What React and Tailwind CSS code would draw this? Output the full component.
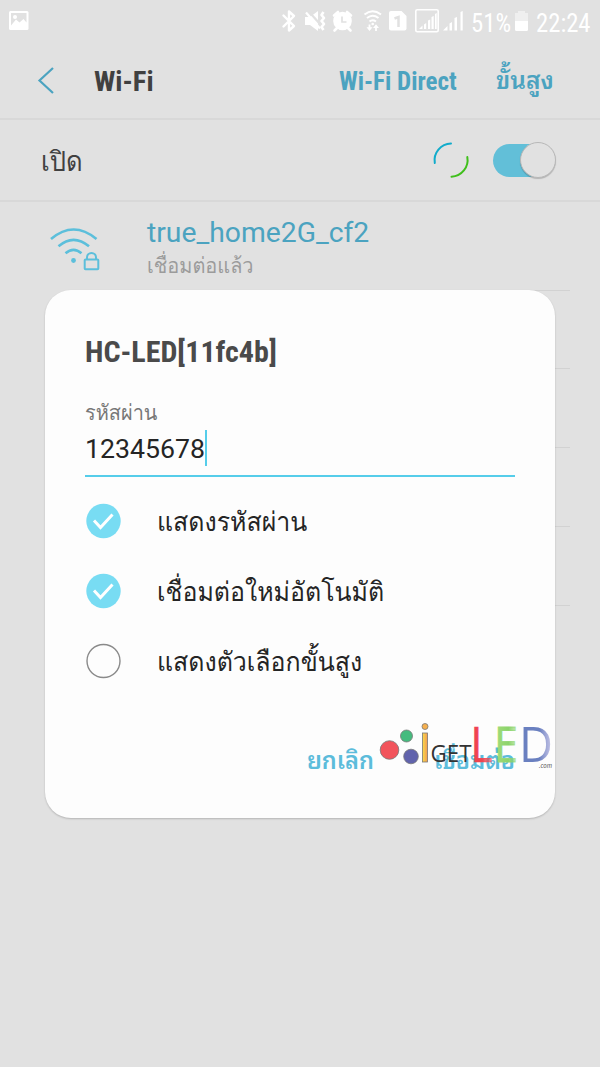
const thai = "font-['Loma','Noto_Sans_Thai_Looped',sans-serif]";
const thaiBold = "font-['Noto_Sans_Thai_Looped','Loma',sans-serif] font-semibold";

function StatusBar() {
  return (
    <div className="flex h-[42px] items-center pl-2 pr-2.5">
      <svg className="h-[22px] w-[24px]" viewBox="8 10 24 22">
        <rect x="9" y="11" width="19.500" height="19" rx="1.500" fill="#fff" />
        <path d="M11 13h15.500v9.500l-3-3.500-4 3.500-3.500-3-5 6z" fill="#e1e1e1" />
        <circle cx="15" cy="17" r="2" fill="#fff" />
      </svg>
      <svg className="ml-auto h-[42px] w-[196px] shrink-0" viewBox="275 0 196 42" fill="none" stroke="#fff">
        <path d="M283.500 15.500l10.500 10.500-5 4.500V11.500l5 4.500-10.500 10.500" strokeWidth="2.400" strokeLinejoin="round" strokeLinecap="round" />
        <path d="M305 17h5l8-6v20l-8-6h-5z" fill="#fff" stroke="none" />
        <path d="M308 10.500l15 17" strokeWidth="2.200" stroke="#e1e1e1" />
        <path d="M306 12.500l14 16" strokeWidth="2.200" />
        <path d="M323.500 12l-2 3 2.500 3-2.500 3 2.500 3-2.500 3 2 3" strokeWidth="2.600" strokeLinejoin="round" />
        <circle cx="342.500" cy="21" r="9.300" fill="#fff" stroke="none" />
        <path d="M334 15.500l4-3.500M351 15.500l-4-3.500M337 28l-2.500 2.500M348 28l2.500 2.500" strokeWidth="2.600" strokeLinecap="round" />
        <path d="M342 16.500V22h4.500" stroke="#e1e1e1" strokeWidth="1.700" />
        <path d="M364.500 14.500q8-6.500 16.500 0M367 18q5.500-4.500 11.500 0M369.500 21.500q3-2.500 6.500 0" strokeWidth="2" />
        <circle cx="372.700" cy="24" r="1.300" fill="#fff" stroke="none" />
        <path d="M369.500 24.500v4M376 31v-4" strokeWidth="1.800" />
        <path d="M366.500 27.300h6l-3 3.700zM373 28h6l-3-3.800z" fill="#fff" stroke="none" />
        <path d="M391 11h10.500l5 5v12.500a2 2 0 0 1-2 2H391a2 2 0 0 1-2-2V13a2 2 0 0 1 2-2z" fill="#fff" stroke="none" />
        <path d="M394.500 18.500l4-1.500v10" stroke="#e1e1e1" strokeWidth="2.500" />
        <rect x="415.800" y="9.800" width="22.400" height="22" rx="1.500" strokeWidth="1.600" />
        <g fill="#fff" stroke="none">
          <path d="M419 29l3.500-3.500v3.500zM424 24.500l2.200-1.500v6h-2.200zM428 20.500l2.200-1v9.500H428zM431.500 17l2.200-1v13h-2.200zM435 14l1.700-1v16H435z" />
          <path d="M443 30.500l4.500-4.500v4.500zM449.500 23.500l2.500-1.500v8.500h-2.500zM454.500 18l2.500-1v13.500h-2.500zM460.500 12l2.200-1v19.500h-2.200z" />
        </g>
      </svg>
      <span className="w-[41px] origin-left scale-x-[0.95] whitespace-nowrap pt-[3px] font-['Roboto_Condensed','Roboto',sans-serif] text-[26px] leading-none text-white">51%</span>
      <svg className="ml-[3px] h-[20px] w-[13px] shrink-0" viewBox="0 0 13 20">
        <path d="M3 0h7v2h3v8H0V2h3z" fill="#efefef" />
        <path d="M0 10h13v8.500q0 1.500-1.500 1.500h-10q-1.500 0-1.500-1.500z" fill="#fff" />
      </svg>
      <span className="ml-2 w-[54px] origin-left scale-x-[0.95] whitespace-nowrap pt-[3px] font-['Roboto_Condensed','Roboto',sans-serif] text-[26px] leading-none text-white">22:24</span>
    </div>
  );
}

function Header() {
  return (
    <header className="flex h-[78px] items-center border-b-2 border-[#d8d8d8] font-['Roboto_Condensed','Roboto',sans-serif] font-bold text-[#4ba3c0]">
      <svg className="ml-[37px] h-[28px] w-[18px]" viewBox="0 0 18 28" fill="none" stroke="#4ba3c0" strokeWidth="2.200">
        <path d="M16 2L2.500 14.500 16 27" />
      </svg>
      <h1 className="ml-[39px] w-[120px] pt-[5px] text-[28.5px] text-[#404040]">Wi-Fi</h1>
      <span className="ml-auto w-[117px] whitespace-nowrap pt-[3px] text-[25px]">Wi-Fi Direct</span>
      <span className={`ml-10 w-[104px] whitespace-nowrap pb-[3px] text-[24.500px] ${thaiBold}`}>ขั้นสูง</span>
    </header>
  );
}

function PowerRow() {
  return (
    <div className="flex h-[82px] items-center border-b-2 border-[#d8d8d8] pl-[41px] pr-[44px]">
      <span className={`origin-left scale-x-[0.93] pt-[3px] text-[27.500px] text-[#404040] ${thai}`}>เปิด</span>
      <svg className="ml-auto h-[40px] w-[40px]" viewBox="431 140 40 40" fill="none" strokeWidth="2" strokeLinecap="round">
        <path d="M434.800 163A16.700 16.700 0 0 1 451 143.500" stroke="#12accb" />
        <path d="M467.300 157A16.700 16.700 0 0 1 451.500 176.700" stroke="#3fbf1b" />
      </svg>
      <div className="ml-[22px] flex h-[33px] w-[63px] items-center justify-end rounded-full bg-[linear-gradient(90deg,#62bfd8_70%,transparent_70%)]">
        <div className="h-9 w-9 shrink-0 rounded-full border border-[#b8b8b8] bg-[#e1e1e1] shadow-[0_1px_1px_#0003]" />
      </div>
    </div>
  );
}

function NetworkRow() {
  return (
    <div className="ml-[49px] mr-[30px] flex h-[88.500px]">
      <svg className="mt-[24px] h-[48px] w-[54px] shrink-0" viewBox="49 226 54 48" fill="none" stroke="#5cbfdb" strokeWidth="2.600">
        <path d="M51 239q22.500-19 45.500 0M58.500 246.300q15-13 30.500 0M65.500 253.300q8-7 16 0" />
        <circle cx="73.500" cy="260.500" r="2.400" fill="#5cbfdb" stroke="none" />
        <rect x="84.700" y="259.500" width="13.600" height="9.800" rx=".8" strokeWidth="2" />
        <path d="M87 259.500v-2a4.500 4.500 0 0 1 9 0v2" strokeWidth="2" />
      </svg>
      <div className="ml-[44px] flex-1 border-b border-[#d2d2d2] pt-[14px]">
        <div className="whitespace-nowrap font-['Roboto',sans-serif] text-[28.300px] leading-[34px] text-[#4ba3c0]">true_home2G_cf2</div>
        <div className={`w-fit origin-left scale-x-[0.935] whitespace-nowrap text-[21.300px] leading-[32px] text-[#9b9b9b] ${thai}`}>เชื่อมต่อแล้ว</div>
      </div>
    </div>
  );
}

function Option({ label, checked }) {
  return (
    <label className="flex h-[70px] items-center">
      <svg className="h-[36px] w-[36px] shrink-0" viewBox="0 0 36 36" fill="none">
        {checked ? (
          <>
            <circle cx="18.500" cy="18" r="17.200" fill="#78dcf3" />
            <path d="M9 17.500l6.500 7L27.500 11.500" stroke="#fff" strokeWidth="3" />
          </>
        ) : (
          <circle cx="18.500" cy="18" r="16.500" stroke="#8a8a8a" strokeWidth="1.400" />
        )}
      </svg>
      <span className={`ml-[36px] origin-left scale-x-[0.93] whitespace-nowrap pt-0.5 text-[26.800px] text-[#252525] ${thai}`}>{label}</span>
    </label>
  );
}

function Watermark() {
  return (
    <svg className="absolute left-[333px] top-[418px] h-[76px] w-[180px] overflow-visible" viewBox="378 708 180 76">
      <defs>
        <linearGradient id="amber"><stop offset="0" stopColor="#f9dc4a" /><stop offset="1" stopColor="#f39a52" /></linearGradient>
        <linearGradient id="red"><stop offset="0" stopColor="#f0444f" /><stop offset=".5" stopColor="#f0444f" /><stop offset="1" stopColor="#f0444f" stopOpacity=".5" /></linearGradient>
        <linearGradient id="green"><stop offset="0" stopColor="#a5dc7c" /><stop offset=".6" stopColor="#8bd46b" /><stop offset="1" stopColor="#8bd46b" stopOpacity=".4" /></linearGradient>
        <linearGradient id="blue"><stop offset="0" stopColor="#6a80c0" /><stop offset=".6" stopColor="#6a80c0" /><stop offset="1" stopColor="#aaa8dc" stopOpacity=".6" /></linearGradient>
      </defs>
      <g stroke="#777" strokeWidth=".8">
        <circle cx="389.500" cy="750" r="9.300" fill="#f2545c" />
        <circle cx="406.500" cy="736" r="6" fill="#45bb7e" />
        <circle cx="411" cy="756.500" r="7.300" fill="#6163ac" />
        <circle cx="425" cy="726.500" r="3" fill="#f6b04e" />
        <rect x="422.500" y="733" width="5" height="29" fill="url(#amber)" />
      </g>
      <g fontFamily="Open Sans, sans-serif">
        <text x="430.500" y="762" fontSize="24" textLength="41" lengthAdjust="spacingAndGlyphs" fill="#333">GET</text>
        <text x="470.500" y="762" fontSize="50" textLength="22" lengthAdjust="spacingAndGlyphs" fill="url(#red)" stroke="url(#red)" strokeWidth=".7">L</text>
        <text x="494" y="762" fontSize="50" textLength="24" lengthAdjust="spacingAndGlyphs" fill="url(#green)" stroke="url(#green)" strokeWidth=".8">E</text>
        <text x="519" y="762" fontSize="50" textLength="34" lengthAdjust="spacingAndGlyphs" fill="url(#blue)">D</text>
        <text x="539" y="768" fontSize="6.500" fontStyle="italic" textLength="13" lengthAdjust="spacingAndGlyphs" fill="#444">.com</text>
      </g>
    </svg>
  );
}

function PasswordDialog() {
  return (
    <div className="absolute left-[45px] top-[290px] h-[528px] w-[510px] rounded-[26px] bg-[#fdfdfd] px-10 pt-[40px] shadow-[0_1px_2px_#0003]">
      <h2 className="h-[44px] whitespace-nowrap font-['Roboto_Condensed','Roboto',sans-serif] text-[30px] font-bold leading-[44px] text-[#4a4a4a]">HC-LED[11fc4b]</h2>
      <div className={`mt-[24px] w-fit origin-left scale-x-[0.935] text-[21.300px] leading-[30px] text-[#777] ${thai}`}>รหัสผ่าน</div>
      <div className="flex h-[49px] items-start border-b-2 border-[#55cdea] pt-[2px]">
        <span className="w-[120px] font-['Roboto',sans-serif] text-[26.700px] leading-[38px] text-[#252525]">12345678</span>
        <span className="h-[36px] w-[2px] bg-[#55cdea]" />
      </div>
      <div className="mt-[9px]">
        <Option label="แสดงรหัสผ่าน" checked />
        <Option label="เชื่อมต่อใหม่อัตโนมัติ" checked />
        <Option label="แสดงตัวเลือกขั้นสูง" />
      </div>
      <div className={`mt-[43px] flex justify-end gap-[60px] text-[23.500px] leading-[40px] text-[#5cbcdb] ${thaiBold}`}>
        <button>ยกเลิก</button>
        <button>เชื่อมต่อ</button>
      </div>
      <Watermark />
    </div>
  );
}

export default function App() {
  return (
    <main className="relative h-[1067px] w-[600px] overflow-hidden bg-[#e1e1e1]">
      <StatusBar />
      <Header />
      <PowerRow />
      <NetworkRow />
      {[1, 2, 3, 4].map((n) => (
        <div key={n} className="ml-[147px] mr-[30px] h-[78.800px] border-b border-[#d2d2d2]" />
      ))}
      <PasswordDialog />
    </main>
  );
}
